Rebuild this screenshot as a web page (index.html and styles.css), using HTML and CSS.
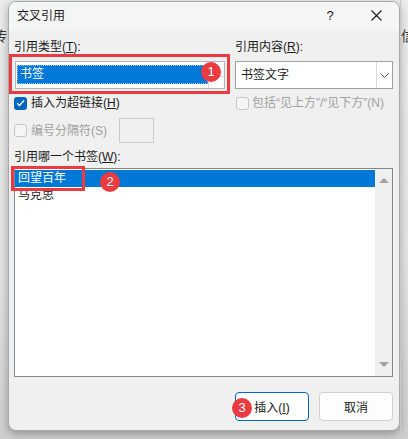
FILE: index.html
```html
<!DOCTYPE html>
<html lang="zh-CN">
<head>
    <meta charset="UTF-8">
    <meta name="viewport" content="width=device-width, initial-scale=1.0">
    <title>交叉引用</title>
    <link rel="stylesheet" href="styles.css">
</head>
<body>
<div class="screen">
    <div class="edge edge-left"><span class="doc-char">传</span></div>

    <div class="dialog">
        <div class="titlebar">
            <span class="title">交叉引用</span>
            <span class="help">?</span>
            <span class="close">
                <svg width="11" height="11" viewBox="0 0 11 11"><path d="M0.5 0.5 L10.5 10.5 M10.5 0.5 L0.5 10.5" stroke="#1a1a1a" stroke-width="1.1" fill="none"/></svg>
            </span>
        </div>

        <div class="content">
            <div class="top-grid">
                <div class="col">
                    <div class="label">引用类型(<u>T</u>):</div>
                    <div class="combo combo-edit">
                        <div class="combo-sel">书签</div>
                        <div class="combo-btn small"></div>
                    </div>
                    <div class="check-row first">
                        <span class="checkbox checked">
                            <svg width="9" height="8" viewBox="0 0 9 8"><path d="M1 4 L3.5 6.5 L8 1.5" stroke="#fff" stroke-width="1.3" fill="none"/></svg>
                        </span>
                        <span>插入为超链接(<u>H</u>)</span>
                    </div>
                    <div class="check-row second">
                        <span class="checkbox disabled"></span>
                        <span class="muted">编号分隔符(S)</span>
                        <span class="sep-input"></span>
                    </div>
                </div>
                <div class="col">
                    <div class="label">引用内容(<u>R</u>):</div>
                    <div class="combo">
                        <div class="combo-text">书签文字</div>
                        <div class="combo-btn">
                            <svg width="9" height="5" viewBox="0 0 9 5"><path d="M0.5 0.5 L4.5 4.5 L8.5 0.5" stroke="#555" stroke-width="1" fill="none"/></svg>
                        </div>
                    </div>
                    <div class="check-row first right">
                        <span class="checkbox disabled"></span>
                        <span class="muted">包括“见上方”/“见下方”(N)</span>
                    </div>
                </div>
            </div>

            <div class="label list-label">引用哪一个书签(<u>W</u>):</div>
            <div class="listbox">
                <div class="list-items">
                    <div class="item selected">回望百年</div>
                    <div class="item">马克思</div>
                </div>
                <div class="scrollbar">
                    <span class="arrow up"></span>
                    <span class="arrow down"></span>
                </div>
            </div>

            <div class="buttons">
                <button class="btn btn-default">插入(<u>I</u>)</button>
                <button class="btn">取消</button>
            </div>
        </div>
    </div>

    <div class="edge edge-right"><span class="doc-char">信</span></div>

    <div class="mark mark-type"></div>
    <div class="mark mark-item"></div>
    <div class="badge badge-1">1</div>
    <div class="badge badge-2">2</div>
    <div class="badge badge-3">3</div>
</div>
</body>
</html>
```

FILE: styles.css
```css
* {
    margin: 0;
    padding: 0;
    box-sizing: border-box;
}

body, html {
    width: 408px;
    height: 439px;
    overflow: hidden;
    background: #e4e4e4;
    font-family: "Liberation Sans", "Noto Sans CJK SC", sans-serif;
    font-size: 12px;
    color: #1a1a1a;
}

u {
    text-decoration: underline;
    text-underline-offset: 1px;
}

.screen {
    position: relative;
    display: flex;
    align-items: flex-start;
    width: 408px;
    height: 439px;
    background: linear-gradient(180deg, #ececec 0%, #e4e4e4 60%, #cfcfcf 100%);
}

.edge {
    width: 8px;
    height: 100%;
    overflow: hidden;
    flex-shrink: 0;
}

.edge-right {
    border-left: 1px solid #c8c8c8;
}

.doc-char {
    display: block;
    margin-top: 27px;
    font-size: 14px;
    line-height: 16px;
    color: #333;
    font-family: "Noto Sans CJK SC", sans-serif;
}

.edge-left .doc-char {
    margin-left: -7px;
}

.edge-right .doc-char {
    margin-left: 0;
}

.dialog {
    width: 392px;
    height: 430px;
    margin-top: 1px;
    background: #f0f0f0;
    border: 1px solid #a8a8a8;
    border-radius: 8px;
    box-shadow: 0 3px 10px rgba(0, 0, 0, 0.3);
    overflow: hidden;
    flex-shrink: 0;
}

.titlebar {
    display: flex;
    align-items: center;
    height: 29px;
    padding-left: 8px;
    background: #f4f5f5;
}

.title {
    flex: 1;
    line-height: 16px;
    margin-top: -2px;
}

.help {
    width: 46px;
    text-align: center;
    font-size: 13px;
    margin-top: -2px;
}

.close {
    width: 46px;
    display: flex;
    justify-content: center;
    margin-top: -2px;
}

.content {
    padding: 8px 6px 0 5px;
}

.top-grid {
    display: grid;
    grid-template-columns: 211px 1fr;
    column-gap: 10px;
}

.label {
    line-height: 16px;
    height: 16px;
}

.combo {
    display: flex;
    height: 28px;
    margin-top: 6px;
    background: #fff;
    border: 1px solid #a0a0a0;
}

.combo-edit {
    width: 210px;
    margin-left: 1px;
    border-color: #b4b4b4;
}

.combo-sel {
    flex: 1;
    margin: 3px 0 4px 1px;
    padding-left: 3px;
    background: #0078d7;
    color: #fff;
    line-height: 18px;
    outline: 1px dotted #9fc5ee;
    outline-offset: -1px;
}

.combo-btn {
    width: 16px;
    display: flex;
    align-items: center;
    justify-content: center;
    border-left: 1px solid #d9d9d9;
}

.combo-btn.small {
    margin-top: 14px;
    border-top: 1px solid #d9d9d9;
}

.combo-text {
    flex: 1;
    padding-left: 5px;
    line-height: 26px;
}

.check-row {
    display: flex;
    align-items: center;
    gap: 4px;
    line-height: 16px;
}

.check-row.first {
    height: 16px;
    margin-top: 6px;
}

.check-row.second {
    height: 25px;
    margin-top: 7px;
}

.check-row.right {
    margin-left: 1px;
    gap: 3px;
}

.checkbox {
    width: 13px;
    height: 13px;
    border-radius: 3px;
    display: flex;
    align-items: center;
    justify-content: center;
    flex-shrink: 0;
}

.checkbox.checked {
    background: #0067c0;
}

.checkbox.disabled {
    background: #f5f5f5;
    border: 1px solid #c6c6c6;
}

.muted {
    color: #a0a0a0;
}

.sep-input {
    width: 35px;
    height: 25px;
    margin-left: 8px;
    border: 1px solid #c8c8c8;
    background: #f0f0f0;
}

.list-label {
    margin-top: 6px;
}

.listbox {
    display: flex;
    height: 209px;
    margin-top: 3px;
    background: #fff;
    border: 1px solid #82868e;
}

.list-items {
    flex: 1;
    padding-top: 1px;
}

.item {
    height: 17px;
    line-height: 17px;
    padding-left: 3px;
}

.item.selected {
    background: #0078d7;
    color: #fff;
}

.scrollbar {
    width: 17px;
    background: #f0f0f0;
    display: flex;
    flex-direction: column;
    justify-content: space-between;
    align-items: center;
    padding: 9px 0 9px;
}

.arrow {
    width: 0;
    height: 0;
    border-left: 5px solid transparent;
    border-right: 5px solid transparent;
}

.arrow.up {
    border-bottom: 5px solid #a3a3a3;
}

.arrow.down {
    border-top: 5px solid #a3a3a3;
}

.buttons {
    display: flex;
    justify-content: flex-end;
    gap: 10px;
    margin-top: 15px;
}

.btn {
    width: 74px;
    height: 29px;
    font-family: inherit;
    font-size: 12px;
    color: #1a1a1a;
    background: #fdfdfd;
    border: 1px solid #d0d0d0;
    border-radius: 4px;
}

.btn-default {
    border: 1px solid #0067c0;
    box-shadow: inset 0 0 0 1px #fdfdfd;
}

.mark {
    position: absolute;
    border: 3px solid #eb3b41;
}

.mark-type {
    left: 9px;
    top: 54px;
    width: 221px;
    height: 40px;
}

.mark-item {
    left: 11px;
    top: 166px;
    width: 74px;
    height: 25px;
}

.badge {
    position: absolute;
    width: 20px;
    height: 20px;
    border-radius: 50%;
    background: #eb3b41;
    color: #fff;
    font-size: 13px;
    line-height: 20px;
    text-align: center;
    font-family: "Liberation Sans", sans-serif;
}

.badge-1 {
    left: 201px;
    top: 62px;
}

.badge-2 {
    left: 100px;
    top: 172px;
}

.badge-3 {
    left: 232px;
    top: 398px;
}
```
